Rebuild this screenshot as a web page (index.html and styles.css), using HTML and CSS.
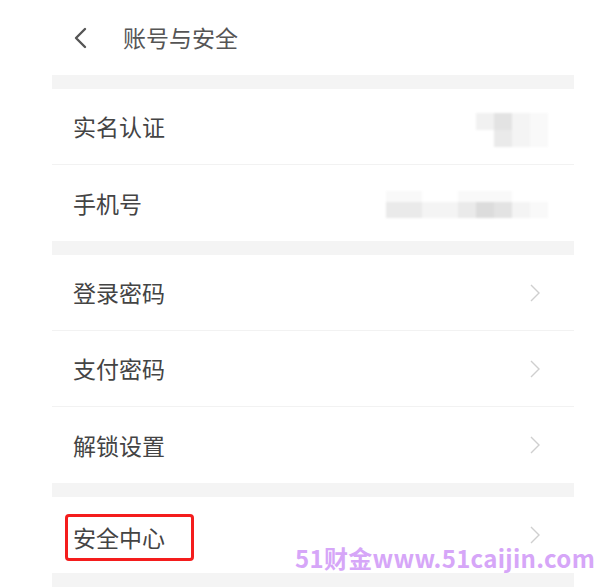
FILE: index.html
```html
<!DOCTYPE html>
<html lang="zh-CN">
<head>
    <meta charset="UTF-8">
    <meta name="viewport" content="width=device-width, initial-scale=1.0">
    <title>账号与安全</title>
    <link rel="stylesheet" href="styles.css">
</head>
<body>
    <header class="topbar">
        <svg class="back" width="16" height="22" viewBox="0 0 16 22">
            <path d="M13 2 L4 11 L13 20" fill="none" stroke="#555" stroke-width="2.4" stroke-linecap="round" stroke-linejoin="round"/>
        </svg>
        <span class="title">账号与安全</span>
    </header>

    <main class="list">
        <div class="gap"></div>
        <div class="row">
            <span class="label">实名认证</span>
            <div class="mosaic mosaic-name">
                <span class="c3"></span><span class="c1"></span><span class="c4"></span><span class="c5"></span>
                <span class="c6"></span><span class="c2"></span><span class="c4"></span><span class="c5"></span>
            </div>
        </div>
        <div class="row">
            <span class="label">手机号</span>
            <div class="mosaic mosaic-phone">
                <span class="c5"></span><span class="c5"></span><span class="c6"></span><span class="c6"></span><span class="c5"></span><span class="c5"></span><span class="c5"></span><span class="c6"></span><span class="c6"></span>
                <span class="c2"></span><span class="c2"></span><span class="c4"></span><span class="c4"></span><span class="c2"></span><span class="c0"></span><span class="c1"></span><span class="c4"></span><span class="c5"></span>
            </div>
        </div>

        <div class="gap"></div>
        <div class="row">
            <span class="label">登录密码</span>
            <svg class="arrow" width="10" height="18" viewBox="0 0 10 18"><path d="M1 1 L9 9 L1 17" fill="none" stroke="#cfcfcf" stroke-width="1.4"/></svg>
        </div>
        <div class="row">
            <span class="label">支付密码</span>
            <svg class="arrow" width="10" height="18" viewBox="0 0 10 18"><path d="M1 1 L9 9 L1 17" fill="none" stroke="#cfcfcf" stroke-width="1.4"/></svg>
        </div>
        <div class="row">
            <span class="label">解锁设置</span>
            <svg class="arrow" width="10" height="18" viewBox="0 0 10 18"><path d="M1 1 L9 9 L1 17" fill="none" stroke="#cfcfcf" stroke-width="1.4"/></svg>
        </div>

        <div class="gap"></div>
        <div class="row">
            <span class="label marked">安全中心</span>
            <svg class="arrow" width="10" height="18" viewBox="0 0 10 18"><path d="M1 1 L9 9 L1 17" fill="none" stroke="#cfcfcf" stroke-width="1.4"/></svg>
        </div>
        <div class="gap"></div>
    </main>

    <div class="watermark">51财金www.51caijin.com</div>
</body>
</html>
```

FILE: styles.css
```css
* {
    margin: 0;
    padding: 0;
    box-sizing: border-box;
}
body {
    background: #fff;
    color: #444;
    font-family: "Noto Sans CJK SC", "Noto Sans", sans-serif;
    width: 612px;
    height: 587px;
    overflow: hidden;
    position: relative;
}
.topbar {
    height: 75px;
    display: flex;
    align-items: center;
    padding-left: 72px;
}
.back {
    display: block;
}
.title {
    margin-left: 35px;
    font-size: 23px;
    color: #555;
    line-height: 1;
}
.list {
    margin-left: 52px;
    width: 522px;
}
.gap {
    height: 14px;
    background: #f4f4f4;
}
.row {
    height: 76px;
    display: flex;
    align-items: center;
    justify-content: space-between;
    padding: 0 34px 0 21px;
    border-bottom: 1px solid #f2f2f2;
}
.row:has(+ .gap) {
    border-bottom: none;
}
.label {
    font-size: 23px;
    line-height: 1;
}
.marked {
    display: inline-flex;
    align-items: center;
    height: 47px;
    margin-left: -8px;
    margin-top: 4px;
    padding: 0 26px 0 5px;
    border: 3px solid #f41d1d;
    border-radius: 4px;
}
.arrow {
    display: block;
}
/* verpixelte Daten */
.mosaic {
    display: grid;
    filter: blur(1px);
}
.mosaic span {
    display: block;
}
.mosaic-name {
    grid-template-columns: repeat(4, 18px);
    grid-template-rows: 17px 17px;
    margin-right: -8px;
    margin-top: 6px;
}
.mosaic-phone {
    grid-template-columns: repeat(9, 18px);
    grid-template-rows: 11px 16px;
    margin-right: -8px;
    margin-top: 2px;
}
.c0 { background: #dcdcdc; }
.c1 { background: #e3e3e3; }
.c2 { background: #eaeaea; }
.c3 { background: #f1f1f1; }
.c4 { background: #f4f4f4; }
.c5 { background: #f9f9f9; }
.c6 { background: #fff; }

.watermark {
    position: absolute;
    left: 295px;
    top: 546px;
    font-size: 24px;
    font-weight: bold;
    line-height: 1;
    letter-spacing: 0.3px;
    color: #d6a6f8;
    white-space: nowrap;
}
```
